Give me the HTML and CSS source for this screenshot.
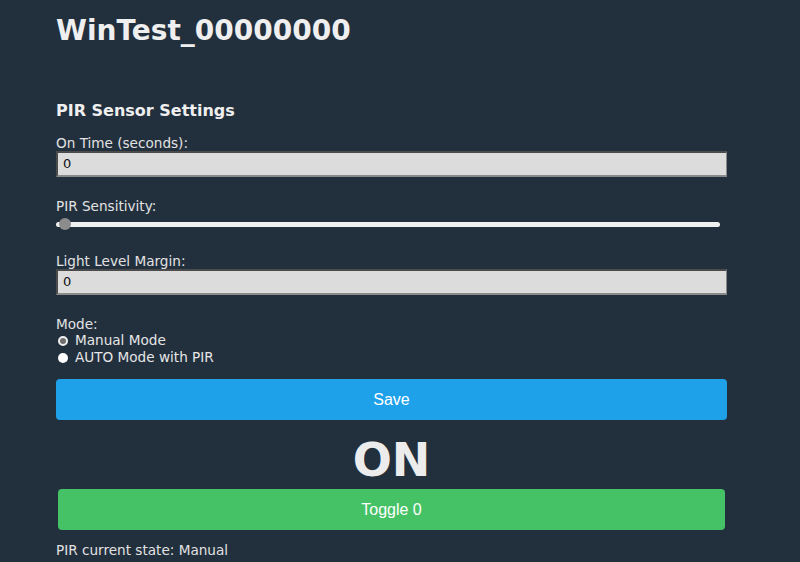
FILE: index.html
```html
<!DOCTYPE html>
<html>
<head>
<meta charset="utf-8">
<link rel="stylesheet" href="styles.css">
</head>
<body>
<div class="page">
  <h1 class="title">WinTest_00000000</h1>
  <h2 class="section">PIR Sensor Settings</h2>
  <div class="field">
    <div class="label">On Time (seconds):</div>
    <div class="input">0</div>
  </div>
  <div class="field">
    <div class="label">PIR Sensitivity:</div>
    <div class="slider"><span class="thumb"></span></div>
  </div>
  <div class="field">
    <div class="label">Light Level Margin:</div>
    <div class="input">0</div>
  </div>
  <div class="field mode">
    <div class="label">Mode:</div>
    <div class="radio"><span class="dot checked"></span>Manual Mode</div>
    <div class="radio"><span class="dot"></span>AUTO Mode with PIR</div>
  </div>
  <div class="btn save">Save</div>
  <div class="state">ON</div>
  <div class="btn toggle">Toggle 0</div>
  <div class="status">PIR current state: Manual</div>
</div>
</body>
</html>
```
FILE: styles.css
```css
html, body {
  margin: 0;
  padding: 0;
  background: #22303e;
}
body {
  font-family: "DejaVu Sans", Verdana, sans-serif;
  color: #e6e6e6;
  width: 800px;
  height: 562px;
  overflow: hidden;
}
.page {
  padding: 0 73px 0 56px;
  display: flex;
  flex-direction: column;
}
.title {
  margin: 13px 0 0;
  font-size: 28px;
  font-weight: bold;
  line-height: 36px;
  color: #efefef;
}
.section {
  margin: 52px 0 0;
  font-size: 16px;
  font-weight: bold;
  line-height: 20px;
  color: #efefef;
}
.field {
  display: flex;
  flex-direction: column;
}
.label {
  font-size: 13.6px;
  line-height: 15px;
  color: #e2e2e2;
}
.field:nth-of-type(1) { margin-top: 15px; }
.input {
  box-sizing: border-box;
  height: 26px;
  background: #dcdcdc;
  border-top: 2px solid #4b4b4b;
  border-left: 2px solid #4b4b4b;
  border-right: 1px solid #8a8a8a;
  border-bottom: 2px solid #8a8a8a;
  color: #111;
  font-size: 13px;
  line-height: 22px;
  padding-left: 5px;
}
.field + .field { margin-top: 22px; }
.slider {
  position: relative;
  margin-top: 8px;
  margin-right: 7px;
  height: 5px;
  border-radius: 3px;
  background: #f0f0f0;
  margin-bottom: 5px;
}
.thumb {
  position: absolute;
  left: 3px;
  top: -4px;
  width: 12px;
  height: 12px;
  border-radius: 50%;
  background: #8c8c8c;
}
.radio {
  display: flex;
  align-items: center;
  font-size: 13.6px;
  line-height: 17px;
  color: #e6e6e6;
}
.dot {
  width: 10px;
  height: 10px;
  box-sizing: border-box;
  border-radius: 50%;
  background: #fff;
  margin: 0 7px 0 2px;
}
.dot.checked {
  border: 2px solid #f0f0f0;
  background: #6f6f6f;
}
.btn {
  display: flex;
  align-items: center;
  justify-content: center;
  height: 41px;
  border-radius: 4px;
  color: #fff;
  font-family: "Liberation Sans", Arial, sans-serif;
  font-size: 16px;
}
.save {
  margin-top: 13px;
  background: #1fa1ea;
}
.state {
  text-align: center;
  font-size: 46px;
  font-weight: bold;
  line-height: 50px;
  margin-top: 15px;
  color: #ececec;
}
.toggle {
  margin: 4px 2px 0;
  background: #46c266;
}
.status {
  margin-top: 12px;
  font-size: 13.6px;
  line-height: 16px;
  color: #e2e2e2;
}
```
